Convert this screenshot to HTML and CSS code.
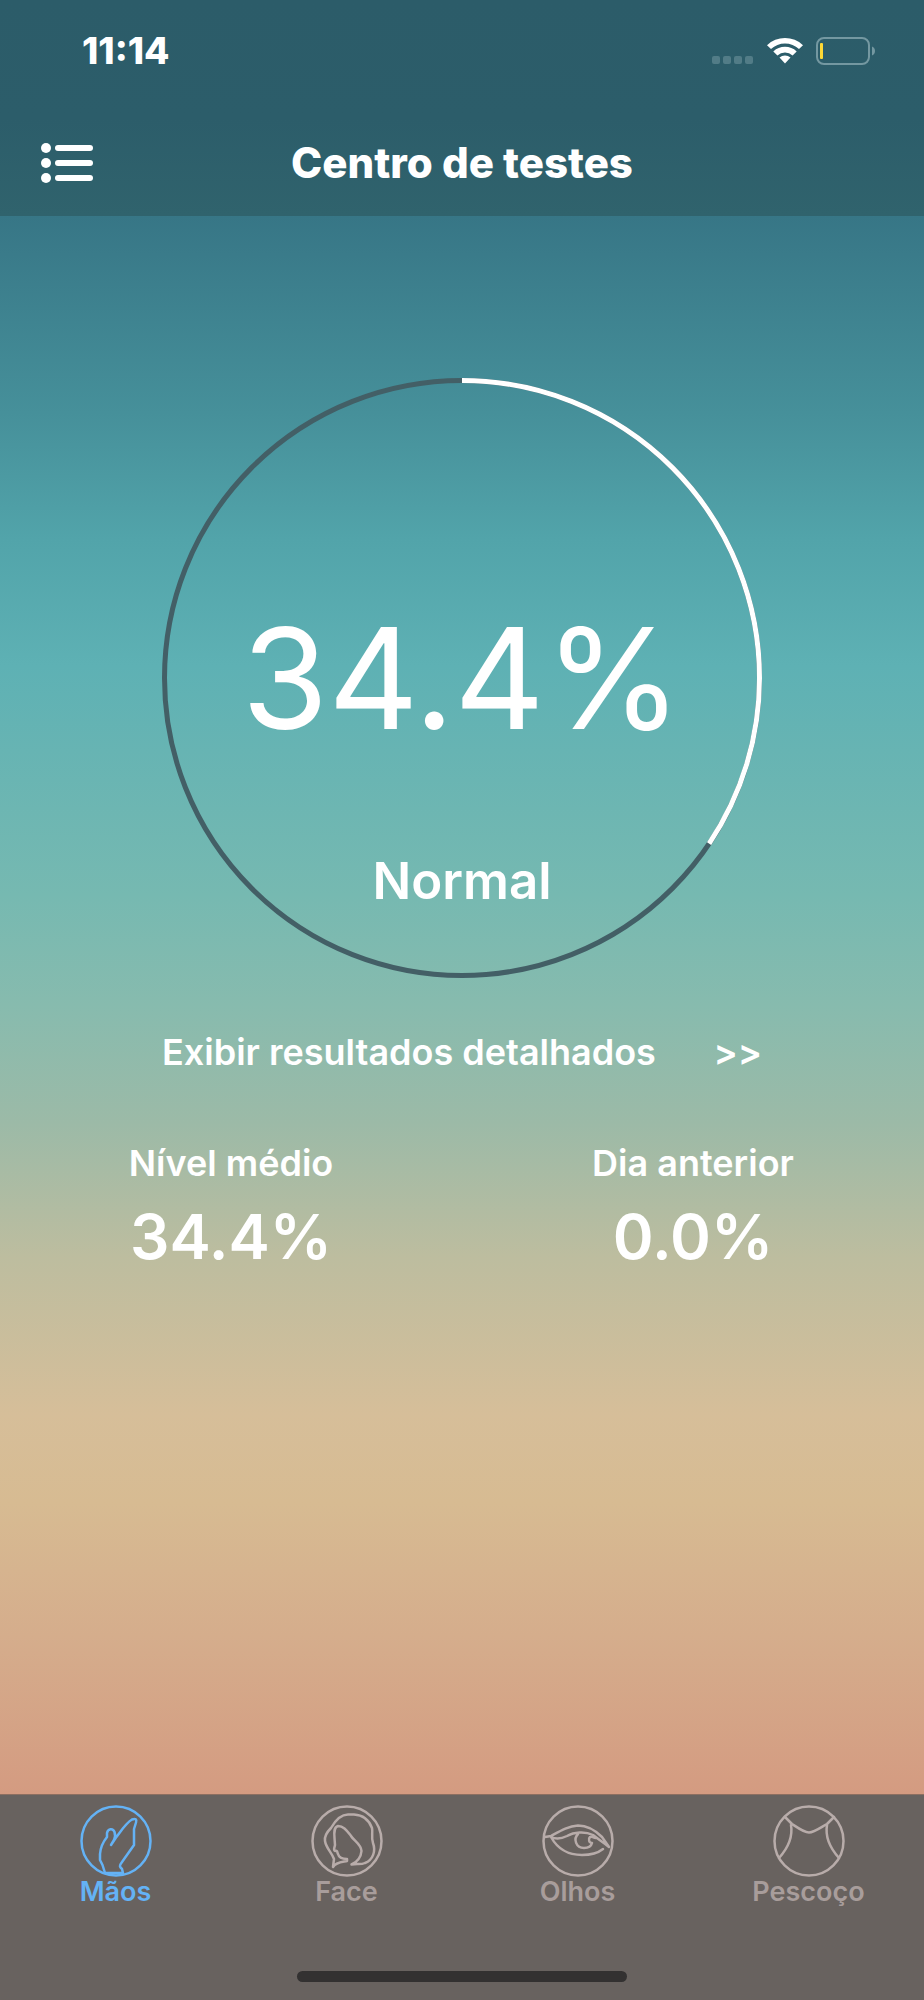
FILE: index.html
```html
<!DOCTYPE html>
<html lang="pt">
<head>
<meta charset="utf-8">
<meta name="viewport" content="width=device-width, initial-scale=1">
<title>Centro de testes</title>
<link rel="stylesheet" href="styles.css">
</head>
<body class="app">
<header class="header">
  <div class="status">
    <span class="time">11:14</span>
    <div class="indicators">
      <svg class="signal" width="42" height="27" viewBox="0 0 42 27" aria-hidden="true">
        <rect x="0" y="19" width="8" height="8" rx="2"/><rect x="11" y="19" width="8" height="8" rx="2"/><rect x="22" y="19" width="8" height="8" rx="2"/><rect x="33" y="19" width="8" height="8" rx="2"/>
      </svg>
      <svg class="wifi" width="36" height="27" viewBox="0 0 36 27" aria-hidden="true">
        <path d="M0 8.2A26 26 0 0 1 36 8.2L32 12A20.500 20.500 0 0 0 4 12Z"/>
        <path d="M6.300 14.400A17.200 17.200 0 0 1 29.700 14.400L25.600 18.400A11.500 11.500 0 0 0 10.400 18.400Z"/>
        <path d="M12.500 20.600A8.400 8.400 0 0 1 23.500 20.600L18 26.500Z"/>
      </svg>
      <svg class="battery" width="59" height="28" viewBox="0 0 59 28" aria-hidden="true">
        <rect class="battery-case" x="1" y="1" width="52" height="26" rx="7"/>
        <path class="battery-cap" d="M56 9.500C60 11 60 17 56 18.500Z"/>
        <rect class="battery-level" x="4" y="6" width="3" height="16" rx="1"/>
      </svg>
    </div>
  </div>
  <div class="nav">
    <button class="menu" type="button" aria-label="Menu">
      <svg width="52" height="40" viewBox="0 0 52 40" aria-hidden="true">
        <circle cx="5" cy="5" r="5"/><circle cx="5" cy="20" r="5"/><circle cx="5" cy="35" r="5"/>
        <rect x="14" y="2" width="38" height="6" rx="3"/><rect x="14" y="17" width="38" height="6" rx="3"/><rect x="14" y="32" width="38" height="6" rx="3"/>
      </svg>
    </button>
    <h1 class="title">Centro de testes</h1>
  </div>
</header>

<main class="content">
  <section class="gauge" aria-label="Resultado">
    <svg class="ring" viewBox="0 0 600 600" aria-hidden="true">
      <circle class="track" cx="300" cy="300" r="297.500"/>
      <circle class="progress" cx="300" cy="300" r="297.500" pathLength="1000" stroke-dasharray="344 1000" transform="rotate(-90 300 300)"/>
    </svg>
    <div class="reading">
      <p class="score">34.4%</p>
      <p class="state">Normal</p>
    </div>
  </section>
  <a class="details" href="#detalhes"><span>Exibir resultados detalhados</span><span>&gt;&gt;</span></a>
  <dl class="stats">
    <div class="stat"><dt>Nível médio</dt><dd>34.4%</dd></div>
    <div class="stat"><dt>Dia anterior</dt><dd>0.0%</dd></div>
  </dl>
</main>

<footer class="footer">
  <nav class="tabs">
    <a class="tab active" href="#maos" aria-current="page">
      <svg class="tab-icon" viewBox="0 0 72 72" stroke-width="2.500" aria-hidden="true">
        <circle cx="36" cy="36" r="34.500"/>
        <path d="M25 68L22.500 60L20 55V49C20.500 42 23 37 27 32V28C28 23.500 33 23 34.500 27C35.500 30 35.500 32 34 35L31 40L36 32.500C41 26 46 18 52 14.500C55.500 13 57 14.500 56 17.500L54 24V40L42 57C39 61 39.500 61.500 42 64L43 68M25 68H43"/>
      </svg>
      <span>Mãos</span>
    </a>
    <a class="tab" href="#face">
      <svg class="tab-icon" viewBox="0 0 72 72" stroke-width="2.500" aria-hidden="true">
        <circle cx="36" cy="36" r="34.500"/>
        <path d="M22 62L23 54C21 48 15 43 14 36C13 30 17 26 20 23C24 16 29 9.500 37 9.500H43C53 10 58 15 61 23C62 28 60 32 62 38C65 46 62 55 54 58C50 60 46 58.500 40.500 59.500C46 57 50 52 50.500 46C50 39 43 36 40 31C36 26 33 21 27 21C23 22 23 27 23.500 33L24 40C23.500 43 22 45 24 46C27 45 26 48 27 49C28 53 33 54 36 54V56C32 57 25 57 22 62Z"/>
      </svg>
      <span>Face</span>
    </a>
    <a class="tab" href="#olhos">
      <svg class="tab-icon" viewBox="0 0 72 72" stroke-width="2.500" aria-hidden="true">
        <circle cx="36" cy="36" r="34.500"/>
        <path d="M3 32L9 31C18 26 26 21 36 20.500C46 20.500 54 26 60 32L67 42C61 37 56 34 51 30C43 26 32 27 25 31C19 34 13 34 9 32C14 41 23 50 40 50C49 50 56 48 61 44"/>
        <path d="M36 29C31 34 34 43 42 43C46 43 49 42 50 38C47 38 46 34 48 32C50 31 51 33 54 33"/>
      </svg>
      <span>Olhos</span>
    </a>
    <a class="tab" href="#pescoco">
      <svg class="tab-icon" viewBox="0 0 72 72" stroke-width="2.500" aria-hidden="true">
        <circle cx="36" cy="36" r="34.500"/>
        <path d="M12 12L19 19C25 23 31 27.500 36 27.500C41 27.500 47 23 54 19L61 12M18 20C20 32 15 43 6 53M54 20C52 32 57 43 66 53"/>
      </svg>
      <span>Pescoço</span>
    </a>
  </nav>
  <div class="home-indicator"></div>
</footer>
</body>
</html>
```

FILE: styles.css
```css
* { box-sizing: border-box; }

.app {
  margin: 0;
  min-height: 100vh;
  display: flex;
  flex-direction: column;
  font-family: Inter, "Liberation Sans", sans-serif;
  font-weight: 600;
  color: #fff;
  background: #d7bb94;
}

.header {
  background: linear-gradient(#2c5c69 0%, #2c5d6a 55%, #30636d 100%);
}

.status {
  display: flex;
  justify-content: space-between;
  align-items: center;
  height: 101px;
  padding: 0 49px 0 82px;
}
.time { font-size: 37px; line-height: 40px; font-weight: 800; }
.indicators { display: flex; align-items: center; gap: 13px; }
.signal { fill: #527c87; }
.wifi { fill: #fff; }
.battery-case { fill: none; stroke: #7498a1; stroke-width: 2; }
.battery-cap { fill: #7498a1; }
.battery-level { fill: #fdd835; }

.nav {
  display: grid;
  grid-template-columns: 1fr auto 1fr;
  align-items: center;
  height: 115px;
  padding: 8px 41px 0;
}
.menu {
  justify-self: start;
  display: flex;
  padding: 0;
  border: 0;
  background: none;
  fill: #fff;
  cursor: pointer;
}
.title { margin: 0; font-size: 42px; line-height: 48px; font-weight: 800; }

.content {
  flex: 1;
  display: flex;
  flex-direction: column;
  align-items: center;
  padding-top: 162px;
  background: linear-gradient(#377686 0%, #46909a 12.5%, #52a4aa 20.500%, #5eb1b4 28.500%, #76b9b1 43%, #87bbae 50%, #9cbaa7 57.500%, #bdbd9f 66%, #d6be99 76%, #d7bb92 81.500%, #d5ad8c 90%, #d49b81 100%);
}

.gauge { display: grid; width: 65%; max-width: 600px; }
.gauge > * { grid-area: 1 / 1; }
.ring { display: block; width: 100%; fill: none; stroke-width: 5; }
.track { stroke: #435f66; }
.progress { stroke: #fff; }
.reading { text-align: center; padding-top: 212px; }
.score { margin: 0; font-size: 140px; line-height: 176px; font-weight: 400; }
.state { margin: 0; padding-top: 83px; font-size: 51px; line-height: 64px; }

.details {
  display: flex;
  justify-content: space-between;
  width: 65%;
  max-width: 600px;
  margin-top: 52px;
  font-size: 36px;
  line-height: 44px;
  color: inherit;
  text-decoration: none;
}

.stats { display: flex; width: 100%; margin: 67px 0 0; }
.stat { flex: 1; text-align: center; }
.stat dt { font-size: 36px; line-height: 44px; }
.stat dd { margin: 0; padding-top: 14px; font-size: 62px; line-height: 76px; }

.footer {
  background: #68625f;
  border-top: 1px solid #8d6f61;
  padding: 10px 0 18px;
}
.tabs { display: flex; }
.tab {
  flex: 1;
  display: flex;
  flex-direction: column;
  align-items: center;
  font-size: 27px;
  line-height: 30px;
  color: #a89d9b;
  text-decoration: none;
}
.tab-icon {
  width: 72px;
  height: 72px;
  fill: none;
  stroke: #b8acaa;
  stroke-linejoin: round;
  stroke-linecap: round;
}
.active { color: #64b2f5; }
.active .tab-icon { stroke: #64b2f5; }
.home-indicator {
  width: 330px;
  height: 11px;
  margin: 64px auto 0;
  border-radius: 6px;
  background: #333131;
}
```
